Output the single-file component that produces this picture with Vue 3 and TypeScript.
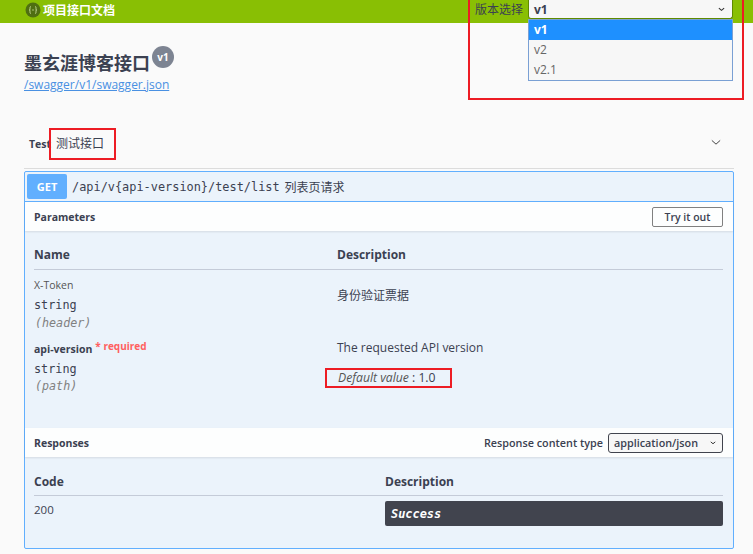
<script setup lang="ts">
const versions: string[] = ['v1', 'v2', 'v2.1']
</script>

<template>
  <div class="page">
    <header class="topbar">
      <div class="brand">
        <svg class="logo" width="16" height="16" viewBox="0 0 16 16">
          <circle cx="8" cy="8" r="7.5" fill="#4f6f12" />
          <path d="M6 4.500C4.800 4.500 5 6 5 7S4.600 8 4 8c.6 0 1 0 1 1s-.2 2.500 1 2.500M10 4.500c1.200 0 1 1.500 1 2.500s.4 1 1 1c-.6 0-1 0-1 1s.2 2.500-1 2.500" fill="none" stroke="#c8dc9a" stroke-width="0.9" />
          <circle cx="8" cy="8" r="0.7" fill="#c8dc9a" />
        </svg>
        <span class="brand-text">项目接口文档</span>
      </div>
      <div class="picker">
        <span class="picker-label">版本选择</span>
        <div class="picker-control">
          <div class="picker-value">
            <span>v1</span>
            <svg class="caret" width="7" height="5" viewBox="0 0 8 5"><path d="M1 1l3 2.500L7 1" fill="none" stroke="#333" stroke-width="1.300" /></svg>
          </div>
          <ul class="menu">
            <li v-for="(v, i) in versions" :key="v" :class="{ active: i === 0 }">{{ v }}</li>
          </ul>
        </div>
      </div>
    </header>

    <section class="info">
      <h1 class="title">墨玄涯博客接口<span class="badge">v1</span></h1>
      <a class="spec-link">/swagger/v1/swagger.json</a>
    </section>

    <main class="content">
      <div class="tag-row">
        <div class="tag-name"><b>Test</b><span class="tag-desc">测试接口</span></div>
        <svg width="10" height="7" viewBox="0 0 12 8"><path d="M1 1.500l5 4.500 5-4.500" fill="none" stroke="#444" stroke-width="1.200" /></svg>
      </div>

      <article class="opblock">
        <div class="summary">
          <span class="method">GET</span>
          <span class="path">/api/v{api-version}/test/list</span>
          <span class="summary-desc">列表页请求</span>
        </div>

        <div class="section-head params-head">
          <h4>Parameters</h4>
          <button class="try">Try it out</button>
        </div>

        <div class="params">
          <div class="param-grid head-row">
            <span>Name</span>
            <span>Description</span>
          </div>
          <div class="param-grid row-one">
            <div>
              <div class="p-name">X-Token</div>
              <div class="p-type">string</div>
              <div class="p-in">(header)</div>
            </div>
            <div class="p-desc first">身份验证票据</div>
          </div>
          <div class="param-grid row-two">
            <div>
              <div class="p-name required">api-version<sup><i>*</i> required</sup></div>
              <div class="p-type">string</div>
              <div class="p-in last">(path)</div>
            </div>
            <div class="p-desc second">
              <div>The requested API version</div>
              <div class="default"><i>Default value</i> : 1.0</div>
            </div>
          </div>
        </div>

        <div class="section-head responses-head">
          <h4>Responses</h4>
          <div class="ctype">
            <b>Response content type</b>
            <div class="ctype-select">
              <span>application/json</span>
              <svg width="6" height="4" viewBox="0 0 8 5"><path d="M1 1l3 2.500L7 1" fill="none" stroke="#333" stroke-width="1.300" /></svg>
            </div>
          </div>
        </div>

        <div class="responses">
          <div class="resp-grid head-row tall">
            <span>Code</span>
            <span>Description</span>
          </div>
          <div class="resp-grid resp-row">
            <span class="code">200</span>
            <div class="success">Success</div>
          </div>
        </div>
      </article>
    </main>

    <div class="mark mark-picker"></div>
    <div class="mark mark-tag"></div>
    <div class="mark mark-default"></div>
  </div>
</template>

<style>
html, body { background: #fafafa; }
</style>

<style scoped>
.page {
  position: relative;
  width: 753px;
  height: 554px;
  overflow: hidden;
  background: #fafafa;
  font-family: "Open Sans", "Noto Sans CJK SC", sans-serif;
  color: #3b4151;
}
.topbar {
  display: flex;
  justify-content: space-between;
  height: 23px;
  padding: 0 10px 0 25px;
  background: #89bf04;
}
.brand { display: flex; align-items: center; gap: 2px; height: 20px; }
.logo { flex: none; }
.brand-text { color: #fff; font-size: 12px; font-weight: 700; }
.picker { display: flex; align-items: flex-start; margin-right: 10px; }
.picker-label { margin: 2px 5px 0 0; font-size: 12px; line-height: 16px; color: #3b4151; }
.picker-control { width: 205px; font-size: 12px; }
.picker-value {
  display: flex;
  align-items: center;
  justify-content: space-between;
  box-sizing: border-box;
  height: 19px;
  padding: 1px 7px 0 5px;
  background: #f7f7f7;
  border: 1px solid #5f8a00;
  border-top: none;
  border-radius: 0 0 3px 3px;
  font-weight: 700;
  color: #3b4151;
}
.menu {
  position: relative;
  z-index: 2;
  margin: 0;
  padding: 0;
  list-style: none;
  background: #f7f7f7;
  border: 1px solid #7aa0d4;
  color: #666;
}
.menu li { height: 20px; line-height: 20px; padding-left: 5px; }
.menu li.active { background: #1e90ff; color: #fff; font-weight: 700; }
.info { padding: 26px 0 0 24px; }
.title {
  display: flex;
  align-items: flex-end;
  height: 27px;
  margin: 0;
  font-size: 18px;
  line-height: 26px;
  font-weight: 700;
  color: #3b4151;
}
.badge {
  align-self: flex-start;
  width: 22px;
  height: 22px;
  margin: -3px 0 0 2px;
  border-radius: 50%;
  background: #7d8492;
  color: #fff;
  font-size: 10px;
  line-height: 22px;
  text-align: center;
}
.spec-link {
  display: block;
  margin-top: 1px;
  font-size: 12px;
  line-height: 16px;
  color: #4990e2;
  text-decoration: underline;
}
.content { padding: 0 19px 0 24px; }
.tag-row {
  display: flex;
  align-items: center;
  justify-content: space-between;
  box-sizing: border-box;
  height: 76px;
  padding: 24px 13px 0 5px;
  border-bottom: 1px solid #dcdcdc;
}
.tag-name { font-size: 10.500px; display: flex; align-items: baseline; }
.tag-name b { font-weight: 700; }
.tag-desc { margin-left: 5px; font-size: 12px; font-weight: 400; }
.opblock {
  box-sizing: border-box;
  height: 378px;
  margin-top: 2px;
  background: #ebf3fb;
  border: 1px solid #61affe;
  border-radius: 2px;
}
.summary {
  display: flex;
  align-items: center;
  height: 29px;
  padding-left: 2px;
  border-bottom: 1px solid #61affe;
}
.method {
  width: 40px;
  height: 25px;
  margin-right: 5px;
  border-radius: 2px;
  background: #61affe;
  color: #fff;
  font-size: 11px;
  font-weight: 700;
  line-height: 25px;
  text-align: center;
}
.path { font-family: "DejaVu Sans Mono", "Noto Sans CJK SC", monospace; font-size: 11.900px; color: #3b4151; }
.summary-desc { margin-left: 5px; font-size: 12px; color: #3b4151; }
.section-head {
  display: flex;
  align-items: center;
  justify-content: space-between;
  box-sizing: border-box;
  padding: 0 10px 0 9px;
  background: #fdfefe;
  box-shadow: 0 1px 2px rgba(0, 0, 0, 0.1);
}
.section-head h4 { margin: 0; font-size: 10.500px; font-weight: 700; }
.params-head { height: 29px; }
.try {
  box-sizing: border-box;
  width: 71px;
  height: 20px;
  padding: 0;
  background: transparent;
  border: 1px solid #808080;
  border-radius: 2px;
  color: #3b4151;
  font-family: inherit;
  font-size: 10.500px;
  font-weight: 600;
}
.params { height: 197px; padding: 0 10px 0 9px; box-sizing: border-box; }
.param-grid { display: grid; grid-template-columns: 303px 1fr; }
.head-row {
  box-sizing: border-box;
  height: 39px;
  align-items: end;
  padding-bottom: 6px;
  border-bottom: 1px solid #c4cbd8;
  font-size: 12px;
  font-weight: 700;
}
.head-row.tall { padding-bottom: 5px; }
.row-one { height: 70px; padding-top: 8px; box-sizing: border-box; }
.row-two { padding-top: 2px; }
.p-name { font-size: 10.500px; line-height: 15px; color: #555; }
.p-name.required { color: #3b4151; font-weight: 700; }
.p-name sup { margin-left: 3px; font-size: 10px; line-height: 0; color: #ff6060; vertical-align: 3px; }
.p-name sup i { font-style: normal; }
.p-type { margin-top: 5px; font-family: "DejaVu Sans Mono", monospace; font-size: 11.800px; line-height: 15px; }
.p-in { margin-top: 3px; padding-left: 1px; font-family: "DejaVu Sans Mono", monospace; font-size: 11.700px; font-style: italic; line-height: 15px; color: #808080; }
.p-in.last { margin-top: 2px; }
.p-desc { font-size: 12px; color: #3b4151; line-height: 16px; }
.p-desc.first { padding-top: 10px; }
.p-desc.second { margin-top: -2px; }
.default { margin-top: 14px; padding-left: 1px; font-size: 12.200px; }
.default i { color: #555; }
.responses-head { height: 29px; }
.ctype { display: flex; align-items: center; gap: 5px; font-size: 10.800px; }
.ctype b { font-weight: 600; }
.ctype-select {
  display: flex;
  align-items: center;
  justify-content: space-between;
  box-sizing: border-box;
  width: 115px;
  height: 20px;
  padding: 0 6px 0 5px;
  background: #f7f7f7;
  border: 1px solid #41444e;
  border-radius: 3px;
  font-weight: 600;
}
.responses { padding: 0 10px 0 9px; }
.resp-grid { display: grid; grid-template-columns: 351px 1fr; }
.resp-row { padding-top: 5px; }
.code { font-size: 11.500px; line-height: 18px; }
.success {
  box-sizing: border-box;
  height: 25px;
  padding-left: 6px;
  background: #41444e;
  border-radius: 2px;
  color: #fff;
  font-family: "DejaVu Sans Mono", monospace;
  font-size: 11.900px;
  font-style: italic;
  font-weight: 700;
  line-height: 26px;
}
.mark { position: absolute; z-index: 3; box-sizing: border-box; border: 2px solid #ed1c24; }
.mark-picker { left: 468px; top: -4px; width: 276px; height: 104px; }
.mark-tag { left: 49px; top: 128px; width: 67px; height: 32px; }
.mark-default { left: 325px; top: 368px; width: 127px; height: 20px; }
</style>
